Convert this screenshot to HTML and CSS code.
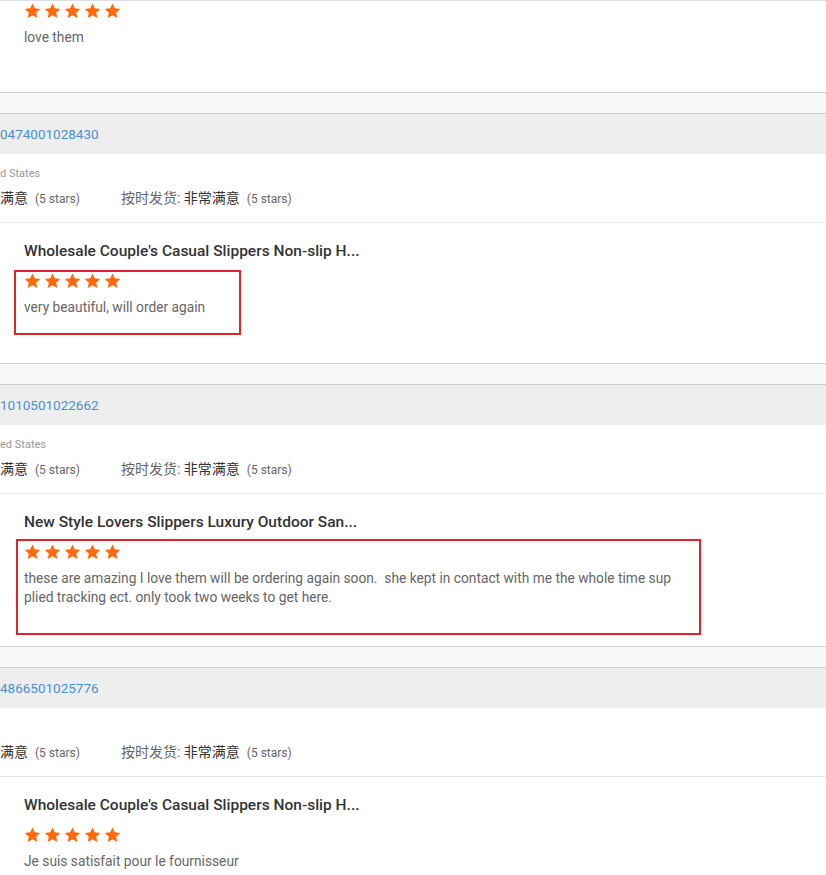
FILE: index.html
```html
<!DOCTYPE html>
<html lang="zh">
<head>
<meta charset="utf-8">
<title>Reviews</title>
<link rel="stylesheet" href="styles.css">
</head>
<body>
<svg class="defs" width="0" height="0" aria-hidden="true">
  <symbol id="star" viewBox="0 0 24 23">
    <path d="M12 0.6l3.3 7.1 7.8 0.9-5.8 5.3 1.6 7.7L12 17.7l-6.9 3.9 1.6-7.7L0.9 8.6l7.8-0.9z"/>
  </symbol>
</svg>
<main class="orders">
  <section class="order order--cut">
    <div class="product product--cut">
      <div class="stars"><svg><use href="#star"/></svg><svg><use href="#star"/></svg><svg><use href="#star"/></svg><svg><use href="#star"/></svg><svg><use href="#star"/></svg></div>
      <p class="review">love them</p>
    </div>
  </section>

  <section class="order">
    <div class="order-head">0474001028430</div>
    <div class="meta">
      <div class="country">d States</div>
      <div class="ratings">
        <div class="rating"><span class="r-value">满意</span><span class="r-stars">(5 stars)</span></div>
        <div class="rating"><span class="r-label">按时发货:</span> <span class="r-value">非常满意</span><span class="r-stars">(5 stars)</span></div>
      </div>
    </div>
    <div class="product">
      <h3 class="title">Wholesale Couple's Casual Slippers Non-slip H...</h3>
      <div class="stars"><svg><use href="#star"/></svg><svg><use href="#star"/></svg><svg><use href="#star"/></svg><svg><use href="#star"/></svg><svg><use href="#star"/></svg></div>
      <p class="review">very beautiful, will order again</p>
      <div class="mark mark--a"></div>
    </div>
  </section>

  <section class="order">
    <div class="order-head">1010501022662</div>
    <div class="meta">
      <div class="country">ed States</div>
      <div class="ratings">
        <div class="rating"><span class="r-value">满意</span><span class="r-stars">(5 stars)</span></div>
        <div class="rating"><span class="r-label">按时发货:</span> <span class="r-value">非常满意</span><span class="r-stars">(5 stars)</span></div>
      </div>
    </div>
    <div class="product">
      <h3 class="title">New Style Lovers Slippers Luxury Outdoor San...</h3>
      <div class="stars"><svg><use href="#star"/></svg><svg><use href="#star"/></svg><svg><use href="#star"/></svg><svg><use href="#star"/></svg><svg><use href="#star"/></svg></div>
      <p class="review review--wide">these are amazing I love them will be ordering again soon.&nbsp; she kept in contact with me the whole time supplied tracking ect. only took two weeks to get here.</p>
      <div class="mark mark--b"></div>
    </div>
  </section>

  <section class="order">
    <div class="order-head">4866501025776</div>
    <div class="meta">
      <div class="country"></div>
      <div class="ratings">
        <div class="rating"><span class="r-value">满意</span><span class="r-stars">(5 stars)</span></div>
        <div class="rating"><span class="r-label">按时发货:</span> <span class="r-value">非常满意</span><span class="r-stars">(5 stars)</span></div>
      </div>
    </div>
    <div class="product">
      <h3 class="title">Wholesale Couple's Casual Slippers Non-slip H...</h3>
      <div class="stars"><svg><use href="#star"/></svg><svg><use href="#star"/></svg><svg><use href="#star"/></svg><svg><use href="#star"/></svg><svg><use href="#star"/></svg></div>
      <p class="review">Je suis satisfait pour le fournisseur</p>
    </div>
  </section>
</main>
</body>
</html>
```
FILE: styles.css
```css
html, body {
  margin: 0;
  padding: 0;
}
body {
  background: #f8f8f8;
  border-top: 1px solid #dcdfe8;
  overflow: hidden;
  font-family: Roboto, "Noto Sans CJK SC", "Liberation Sans", sans-serif;
  color: #333;
}
.defs {
  position: absolute;
  width: 0;
  height: 0;
}
.orders {
  display: flex;
  flex-direction: column;
  gap: 20px;
}
.order {
  background: #fff;
  border-top: 1px solid #cfcfcf;
  border-bottom: 1px solid #cfcfcf;
}
.order--cut {
  border-top: none;
}
.order-head {
  height: 40px;
  line-height: 40px;
  background: #eeeeee;
  color: #4a8fcf;
  font-size: 13.5px;
}
.meta {
  padding: 12px 0 13px;
  border-bottom: 1px solid #e8e8e8;
}
.country {
  height: 16px;
  line-height: 16px;
  font-size: 11px;
  color: #999;
  margin-bottom: 6px;
}
.ratings {
  display: flex;
  gap: 41px;
  line-height: 20px;
}
.rating {
  font-size: 14px;
  white-space: nowrap;
}
.r-label {
  color: #666;
}
.r-value {
  color: #333;
}
.r-stars {
  font-size: 12px;
  color: #666;
  margin-left: 7px;
}
.product {
  position: relative;
  box-sizing: border-box;
  min-height: 140px;
  padding: 18px 0 39px 24px;
}
.product--cut {
  padding-top: 2px;
  min-height: 91px;
}
.title {
  margin: 0 0 12px;
  font-size: 15.5px;
  line-height: 20px;
  font-weight: 500;
  color: #333;
  white-space: nowrap;
}
.stars {
  display: flex;
  gap: 3px;
  height: 16px;
}
.stars svg {
  width: 17px;
  height: 16px;
  fill: #ff6a0e;
}
.review {
  margin: 9px 0 0;
  font-size: 13.75px;
  line-height: 19px;
  color: #666;
}
.review--wide {
  width: 648px;
  word-break: break-all;
}
.mark {
  position: absolute;
  box-sizing: border-box;
  border: 2px solid #e2222b;
}
.mark--a {
  top: 47px;
  left: 14px;
  width: 227px;
  height: 65px;
}
.mark--b {
  top: 45px;
  left: 16px;
  width: 685px;
  height: 96px;
}
```
